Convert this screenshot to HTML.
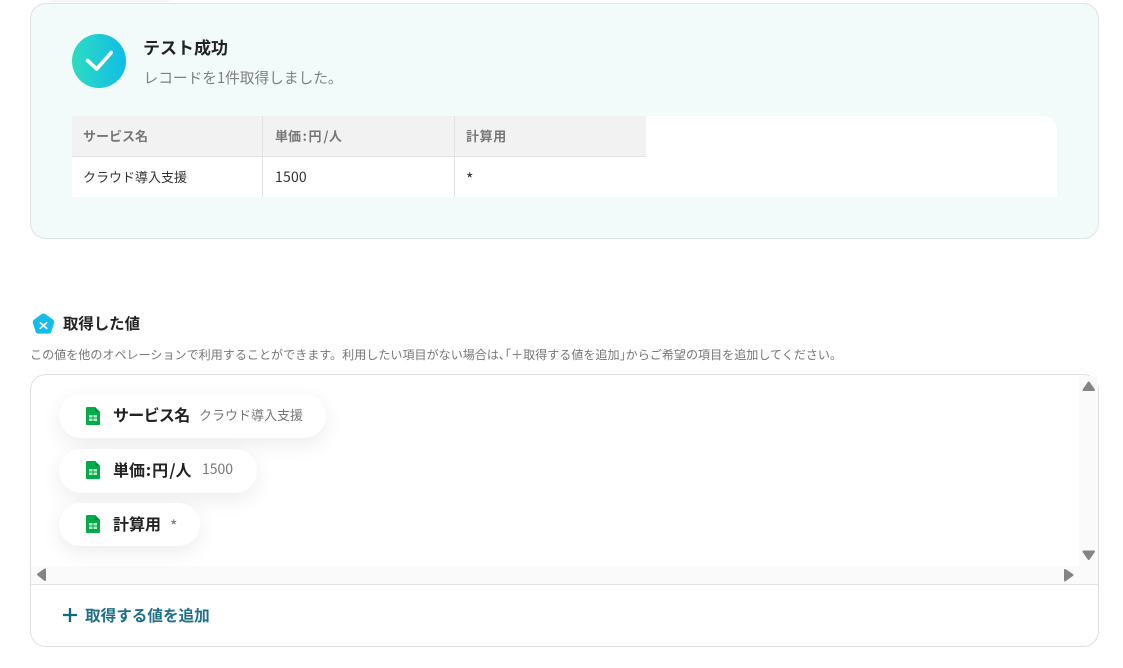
<!DOCTYPE html>
<html lang="ja">
<head>
<meta charset="utf-8">
<style>
html,body{margin:0;padding:0;background:#fff;}
body{width:1123px;height:668px;position:relative;overflow:hidden;font-family:"Liberation Sans","Noto Sans CJK JP",sans-serif;color:#222;}
.a{position:absolute;white-space:nowrap;}
.cjk{font-family:"Noto Sans CJK JP","Liberation Sans",sans-serif;}
.card{left:30px;top:3px;width:1067px;height:234px;background:#f2fafa;border:1px solid #e0e3e3;border-radius:16px;}
.tw{left:72px;top:116px;width:985px;height:81px;background:#fff;border-radius:0 14px 0 0;}
.th{top:116px;height:40px;background:#f2f2f2;border-bottom:1px solid #e2e2e2;}
.vl{top:116px;width:1px;height:81px;background:#e2e2e2;}
.tht{top:115px;line-height:41px;font-size:13px;font-weight:700;color:#777;}
.td{top:157px;line-height:40px;font-size:13px;color:#333;}
.box{left:30px;top:374px;width:1067px;height:271px;border:1px solid #e0e0e0;border-radius:16px;}
.pill{left:59px;height:44px;background:#fff;border-radius:22px;box-shadow:0 6px 20px rgba(0,0,0,.08);}
.pn{font-size:16px;font-weight:700;color:#222;line-height:22px;}
.pv{font-size:13px;color:#777;line-height:20px;}
.w{padding:0 1px 0 .9px;}
.w3{padding:0 0 0 1.2px;}
.w2{padding:0 1.6px;}
.w4{padding:0 .4px 0 2px;}
</style>
</head>
<body>
<div class="a" style="left:50px;top:-6px;width:120px;height:6px;box-shadow:0 2px 6px rgba(0,0,0,.07);"></div>
<div class="a card"></div>
<svg class="a" style="left:72px;top:34px;" width="54" height="54" viewBox="0 0 54 54">
<defs><linearGradient id="g" x1="0" y1="0" x2="1" y2="0"><stop offset="0" stop-color="#2ddcc0"/><stop offset="1" stop-color="#10bce8"/></linearGradient></defs>
<circle cx="27" cy="27" r="27" fill="url(#g)"/>
<path d="M15.5 26.5L24.7 35L39.2 18.5" fill="none" stroke="#fff" stroke-width="3.6" stroke-linecap="round" stroke-linejoin="round"/>
</svg>
<div class="a cjk" style="left:143px;top:35px;font-size:17px;font-weight:700;line-height:24px;color:#222;">テスト成功</div>
<div class="a cjk" style="left:143.5px;top:67px;font-size:14.7px;line-height:22px;color:#808080;">レコードを1件取得しました。</div>

<div class="a tw"></div>
<div class="a th" style="left:72px;width:574px;"></div>
<div class="a vl" style="left:262px;"></div>
<div class="a vl" style="left:454px;"></div>
<div class="a tht cjk" style="left:83px;">サービス名</div>
<div class="a tht cjk" style="left:275px;">単価<span class="w2">:</span>円<span class="w4">/</span>人</div>
<div class="a tht cjk" style="left:466px;letter-spacing:.6px;">計算用</div>
<div class="a td cjk" style="left:83px;">クラウド導入支援</div>
<div class="a td cjk" style="left:275px;font-size:14px;letter-spacing:.2px;">1500</div>
<div class="a td cjk" style="left:466px;font-size:16px;top:158px;">*</div>

<svg class="a" style="left:32px;top:313px;" width="23" height="22" viewBox="0 0 23 22">
<path d="M9.4 1.2Q11.5 -.2 13.6 1.2L21 6.6Q22.8 8 22.1 10L19.4 18.6Q18.8 20.6 16.6 20.6H6.4Q4.2 20.6 3.6 18.6L.9 10Q.2 8 2 6.6Z" fill="#12bdea"/>
<path d="M8.3 9.6L14.7 15.4M14.7 9.6L8.3 15.4" stroke="#fff" stroke-width="1.6" stroke-linecap="round"/>
</svg>
<div class="a cjk" style="left:63px;top:312px;font-size:15.4px;font-weight:700;line-height:22px;color:#222;">取得した値</div>
<div class="a cjk" style="left:30px;top:346px;font-size:12.07px;line-height:18px;color:#777;">この値を他のオペレーションで利用することができます。利用したい項目がない場合は､｢＋取得する値を追加｣からご希望の項目を追加してください。</div>

<div class="a box"></div>
<div class="a" style="left:1079px;top:376px;width:19px;height:208px;background:#fafafa;"></div>
<div class="a" style="left:31px;top:566px;width:1067px;height:18px;background:#fafafa;"></div>
<div class="a" style="left:31px;top:584px;width:1067px;height:1px;background:#e4e4e4;"></div>
<svg class="a" style="left:0;top:0;" width="1123" height="668" viewBox="0 0 1123 668">
<g fill="#848484" stroke="#848484" stroke-width="2" stroke-linejoin="round">
<path d="M1088.7 382.5L1094 390H1083.5Z"/>
<path d="M1088.7 559L1094 551.5H1083.5Z"/>
<path d="M38 574.5L45 569.5V580Z"/>
<path d="M1072.5 575L1065 570V580.5Z"/>
</g>
</svg>

<div class="a pill" style="top:394px;width:267px;"></div>
<div class="a pill" style="top:449px;width:198px;"></div>
<div class="a pill" style="top:503px;width:141px;height:43px;"></div>

<svg class="a" style="left:86px;top:407px;" width="14" height="18" viewBox="0 0 14 18"><path d="M1.3 0H9L14 5V16.7Q14 18 12.7 18H1.3Q0 18 0 16.7V1.3Q0 0 1.3 0Z" fill="#00ac47"/><path d="M9 0L14 5H9Z" fill="#0a8a40"/><rect x="3" y="8" width="8" height="6" fill="#bfe8d0"/><path d="M3 11H11M7 8V14" stroke="#00ac47" stroke-width="1"/></svg>
<svg class="a" style="left:86px;top:461px;" width="14" height="18" viewBox="0 0 14 18"><path d="M1.3 0H9L14 5V16.7Q14 18 12.7 18H1.3Q0 18 0 16.7V1.3Q0 0 1.3 0Z" fill="#00ac47"/><path d="M9 0L14 5H9Z" fill="#0a8a40"/><rect x="3" y="8" width="8" height="6" fill="#bfe8d0"/><path d="M3 11H11M7 8V14" stroke="#00ac47" stroke-width="1"/></svg>
<svg class="a" style="left:86px;top:515px;" width="14" height="18" viewBox="0 0 14 18"><path d="M1.3 0H9L14 5V16.7Q14 18 12.7 18H1.3Q0 18 0 16.7V1.3Q0 0 1.3 0Z" fill="#00ac47"/><path d="M9 0L14 5H9Z" fill="#0a8a40"/><rect x="3" y="8" width="8" height="6" fill="#bfe8d0"/><path d="M3 11H11M7 8V14" stroke="#00ac47" stroke-width="1"/></svg>

<div class="a pn cjk" style="left:113px;top:403px;letter-spacing:-.7px;">サービス名</div>
<div class="a pv cjk" style="left:199px;top:405px;">クラウド導入支援</div>
<div class="a pn cjk" style="left:113px;top:458px;">単価<span class="w">:</span>円<span class="w3">/</span>人</div>
<div class="a pv cjk" style="left:202px;top:459px;font-size:14px;">1500</div>
<div class="a pn cjk" style="left:113px;top:512px;">計算用</div>
<div class="a pv cjk" style="left:170px;top:515px;font-size:16px;">*</div>

<svg class="a" style="left:62px;top:607px;" width="16" height="16" viewBox="0 0 16 16"><path d="M8 1V15M1 8H15" stroke="#0f6a80" stroke-width="2.3"/></svg>
<div class="a cjk" style="left:85px;top:604px;font-size:15.6px;font-weight:700;line-height:22px;color:#1f7089;">取得する値を追加</div>
</body>
</html>
